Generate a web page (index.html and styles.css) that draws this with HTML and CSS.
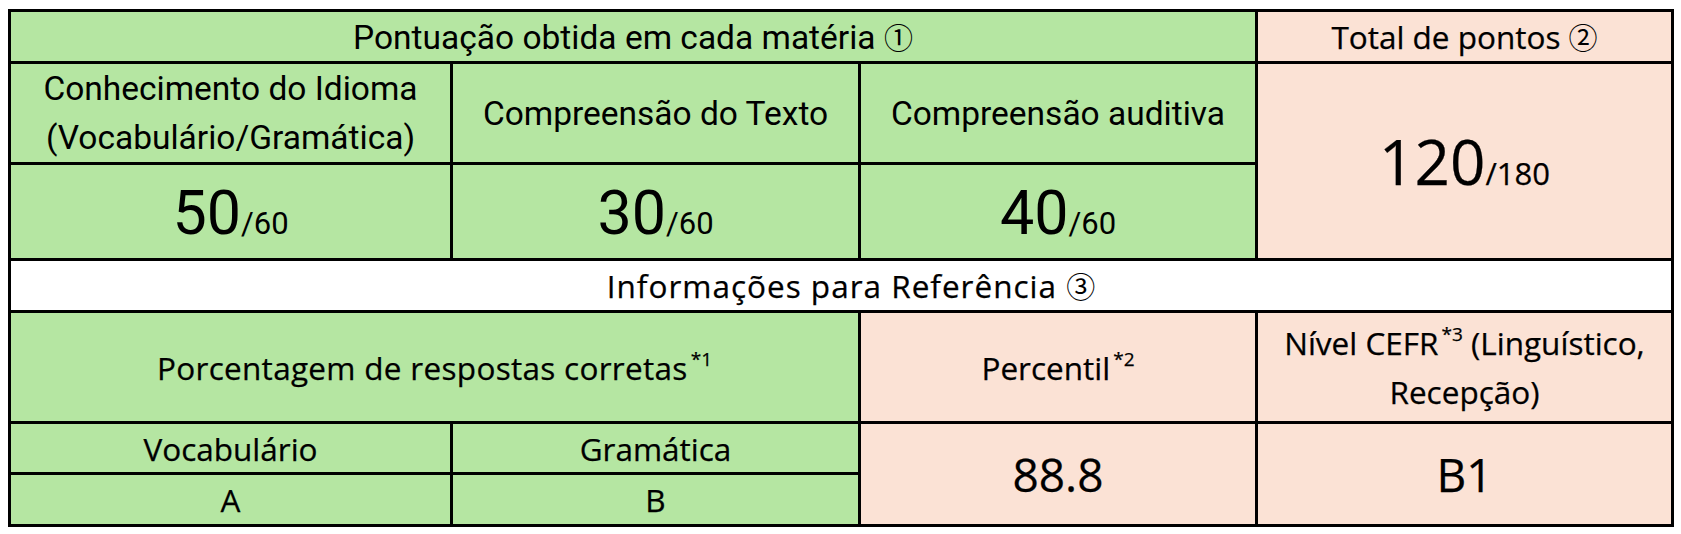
FILE: index.html
```html
<!DOCTYPE html>
<html lang="pt">
<head>
<meta charset="utf-8">
<title>Pontuação</title>
<link rel="stylesheet" href="styles.css">
</head>
<body>
<div class="score">
  <div class="cell green rb span3"><span class="t">Pontuação obtida em cada matéria <span class="circ">①</span></span></div>
  <div class="cell pink ap"><span class="t">Total de pontos <span class="circ">②</span></span></div>

  <div class="cell green rb"><span class="t">Conhecimento do Idioma<br>(Vocabulário/Gramática)</span></div>
  <div class="cell green rb"><span class="t">Compreensão do Texto</span></div>
  <div class="cell green rb"><span class="t">Compreensão auditiva</span></div>
  <div class="cell pink ap rows2 total"><span class="t"><span class="big">120</span><span class="small">/180</span></span></div>

  <div class="cell green rb pts"><span class="t"><span class="big">50</span><span class="small">/60</span></span></div>
  <div class="cell green rb pts"><span class="t"><span class="big">30</span><span class="small">/60</span></span></div>
  <div class="cell green rb pts"><span class="t"><span class="big">40</span><span class="small">/60</span></span></div>

  <div class="cell white ap span4 info"><span class="t">Informações para Referência <span class="circ">③</span></span></div>

  <div class="cell green ap span2 wide"><span class="t">Porcentagem de respostas corretas<sup class="note">*1</sup></span></div>
  <div class="cell pink ap"><span class="t">Percentil<sup class="note">*2</sup></span></div>
  <div class="cell pink ap"><span class="t">Nível CEFR<sup class="note">*3</sup> (Linguístico,<br>Recepção)</span></div>

  <div class="cell green ap"><span class="t">Vocabulário</span></div>
  <div class="cell green ap"><span class="t">Gramática</span></div>
  <div class="cell pink ap rows2 value"><span class="t">88.8</span></div>
  <div class="cell pink ap rows2 value"><span class="t">B1</span></div>

  <div class="cell green ap"><span class="t">A</span></div>
  <div class="cell green ap"><span class="t">B</span></div>
</div>
</body>
</html>
```

FILE: styles.css
```css
html, body {
  margin: 0;
  padding: 0;
  background: #ffffff;
}

body {
  padding: 9px 8px 0 8px;
}

.score {
  display: grid;
  grid-template-columns: 439px 405px 394px 413px;
  grid-template-rows: 49px 98px 93px 49px 108px 48px 49px;
  gap: 3px;
  padding: 3px;
  background: #000000;
  width: max-content;
  color: #000000;
}

.cell {
  display: flex;
  align-items: center;
  justify-content: center;
  text-align: center;
  white-space: nowrap;
}

.t {
  display: block;
}

.green { background: #b5e6a2; }
.pink { background: #fbe2d5; }
.white { background: #ffffff; }

.span2 { grid-column: span 2; }
.span3 { grid-column: span 3; }
.span4 { grid-column: span 4; }
.rows2 { grid-row: span 2; }

.rb {
  font-family: Roboto, "Liberation Sans", sans-serif;
  font-size: 33.5px;
  line-height: 49px;
}

.ap {
  font-family: "Open Sans", "Noto Sans", sans-serif;
  font-size: 31.5px;
  line-height: 49px;
  -webkit-text-stroke: 0.25px #000;
}

.info {
  letter-spacing: 1px;
  padding-left: 20px;
}

.wide {
  letter-spacing: 0.3px;
}

.circ {
  font-family: "Noto Sans CJK JP", "DejaVu Sans", sans-serif;
  font-size: 29px;
  letter-spacing: 0;
  -webkit-text-stroke: 0;
}

.pts .t {
  padding-top: 6px;
}

.big, .small {
  display: inline;
}

.pts .big {
  font-size: 61px;
  line-height: 60px;
}

.pts .small {
  font-size: 31px;
  line-height: 31px;
}

.total .t {
  padding-top: 4px;
}

.total .big {
  font-size: 62px;
  line-height: 62px;
}

.total .small {
  font-size: 31px;
  line-height: 31px;
}

.value {
  font-size: 46px;
}

.note {
  font-size: 19px;
  line-height: 0;
  vertical-align: 14px;
  margin-left: 3px;
  letter-spacing: 0;
}
```
